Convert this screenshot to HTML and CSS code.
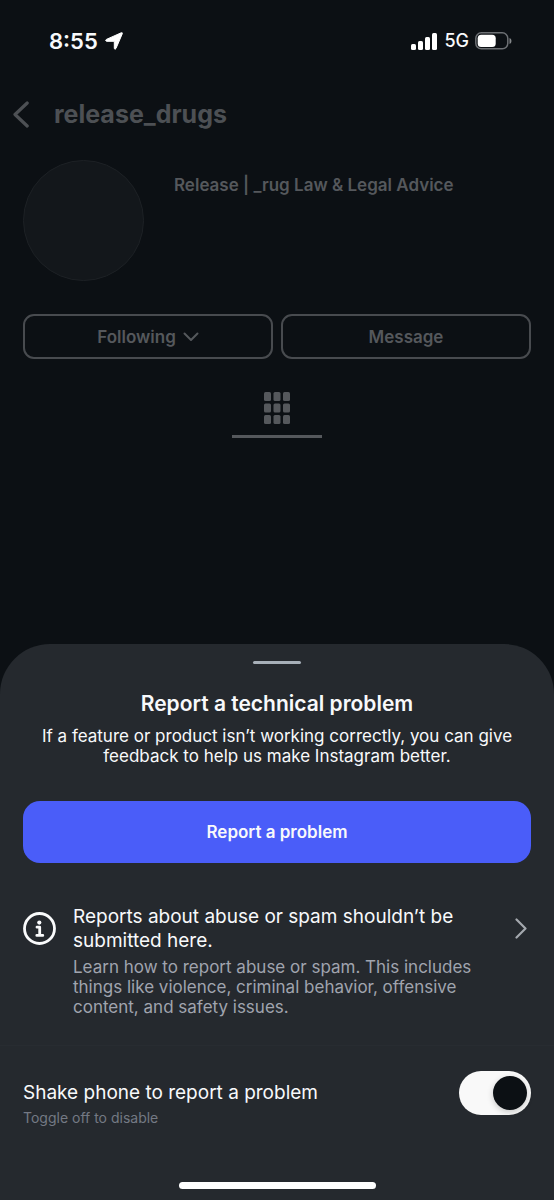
FILE: index.html
```html
<!DOCTYPE html>
<html lang="en">
<head>
<meta charset="utf-8">
<meta name="viewport" content="width=device-width, initial-scale=1">
<title>Report a technical problem</title>
<link rel="stylesheet" href="styles.css">
</head>
<body>
<div class="status">
  <div class="status-group">
    <span class="time">8:55</span>
    <svg width="18" height="18" viewBox="0 0 18 18" aria-hidden="true"><path d="M16.2.8Q17.8.3 17.2 1.9L11 16.4Q9.7 18.2 9.3 16.3V9.3H1.6Q-.2 8.8 1.4 7.4Z" fill="#fff" stroke="#fff" stroke-width="1" stroke-linejoin="round"/></svg>
  </div>
  <div class="status-group status-right">
    <svg width="27" height="17" viewBox="0 0 27 17" fill="#fff" aria-hidden="true"><rect x="0" y="11" width="5" height="6" rx="1.5"/><rect x="7" y="8" width="5" height="9" rx="1.5"/><rect x="14" y="4" width="5" height="13" rx="1.5"/><rect x="21" y="0" width="5" height="17" rx="1.5"/></svg>
    <span class="network">5G</span>
    <svg width="37" height="18" viewBox="0 0 37 18" aria-hidden="true"><rect x=".8" y=".8" width="32" height="16" rx="5.5" fill="none" stroke="#6d7074" stroke-width="1.5"/><rect x="2.7" y="2.7" width="18" height="12.4" rx="3.5" fill="#fff"/><path d="M34.5 6q2 .7 2 3t-2 3z" fill="#85888b"/></svg>
  </div>
</div>

<main class="profile">
  <header class="profile-bar">
    <button class="back" type="button" aria-label="Back"><svg width="16" height="27" viewBox="0 0 16 27" aria-hidden="true"><path d="M14.2 2 2 13.5 14.2 25" fill="none" stroke="#4d5054" stroke-width="3.2" stroke-linecap="round" stroke-linejoin="round"/></svg></button>
    <h1 class="username">release_drugs</h1>
  </header>
  <section class="identity">
    <div class="avatar"></div>
    <p class="fullname">Release | _rug Law &amp; Legal Advice</p>
  </section>
  <div class="actions">
    <button class="action" type="button">Following <svg width="16" height="10" viewBox="0 0 16 10" aria-hidden="true"><path d="m1.5 1.5 6.5 6.5 6.5-6.5" fill="none" stroke="#55585c" stroke-width="2" stroke-linecap="round" stroke-linejoin="round"/></svg></button>
    <button class="action" type="button">Message</button>
  </div>
  <button class="tab" type="button" aria-label="Posts grid">
    <svg width="26" height="32" viewBox="0 0 26 32" fill="#55585c" aria-hidden="true"><rect width="7" height="9" rx="1.5"/><rect x="9.5" width="7" height="9" rx="1.5"/><rect x="19" width="7" height="9" rx="1.5"/><rect y="11.5" width="7" height="9" rx="1.5"/><rect x="9.5" y="11.5" width="7" height="9" rx="1.5"/><rect x="19" y="11.5" width="7" height="9" rx="1.5"/><rect y="23" width="7" height="9" rx="1.5"/><rect x="9.5" y="23" width="7" height="9" rx="1.5"/><rect x="19" y="23" width="7" height="9" rx="1.5"/></svg>
  </button>
</main>

<section class="sheet" aria-labelledby="sheet-title">
  <div class="handle"></div>
  <h2 class="sheet-title" id="sheet-title">Report a technical problem</h2>
  <p class="sheet-text">If a feature or product isn’t working correctly, you can give feedback to help us make Instagram better.</p>
  <button class="primary" type="button">Report a problem</button>
  <a class="notice" href="#abuse">
    <svg class="notice-icon" width="33" height="33" viewBox="0 0 33 33" aria-hidden="true"><circle cx="16.5" cy="16.5" r="15" fill="none" stroke="#fafbfc" stroke-width="2.8"/><circle cx="16.3" cy="10.6" r="2.1" fill="#fafbfc"/><path d="M14 15.2h2.7v8M13.8 23.4h6" fill="none" stroke="#fafbfc" stroke-width="2.8" stroke-linecap="round" stroke-linejoin="round"/></svg>
    <span class="notice-body">
      <span class="row-title">Reports about abuse or spam shouldn’t be submitted here.</span>
      <span class="notice-text">Learn how to report abuse or spam. This includes things like violence, criminal behavior, offensive content, and safety issues.</span>
    </span>
    <svg class="notice-arrow" width="12" height="21" viewBox="0 0 12 21" aria-hidden="true"><path d="m1.5 1.5 9 9-9 9" fill="none" stroke="#a4a8ae" stroke-width="2.2" stroke-linecap="round" stroke-linejoin="round"/></svg>
  </a>
  <div class="setting">
    <label class="setting-label" for="shake"><span class="row-title">Shake phone to report a problem</span><span class="hint">Toggle off to disable</span></label>
    <input class="toggle" id="shake" type="checkbox" role="switch" checked>
  </div>
  <div class="home"></div>
</section>
</body>
</html>
```
FILE: styles.css
```css
* {
  box-sizing: border-box;
}

body {
  margin: 0;
  min-height: 100vh;
  display: flex;
  flex-direction: column;
  background: #0c1014;
  color: #f8f9fb;
  font-family: Inter, "Liberation Sans", sans-serif;
}

h1, h2, p {
  margin: 0;
}

svg {
  display: block;
  flex: none;
}

button {
  margin: 0;
  padding: 0;
  border: 0;
  background: none;
  color: inherit;
  font: inherit;
}

.status {
  display: flex;
  justify-content: space-between;
  align-items: center;
  padding: 28px 42px 0 49px;
}

.status-group {
  display: flex;
  align-items: center;
  gap: 7px;
}

.status-right {
  gap: 6px;
}

.time {
  font-size: 22px;
  line-height: 26px;
  font-weight: 600;
}

.network {
  font-size: 18px;
  line-height: 26px;
  font-weight: 500;
}

.profile {
  color: #55585c;
  font-weight: 600;
}

.profile-bar {
  display: flex;
  align-items: center;
  gap: 25px;
  padding: 44px 13px 0;
}

.username {
  font-size: 25px;
  line-height: 32px;
  font-weight: 700;
  color: #4d5054;
}

.identity {
  display: flex;
  gap: 30px;
  padding: 30px 23px 0;
}

.avatar {
  flex: none;
  width: 121px;
  height: 121px;
  border: 1px solid #1d2125;
  border-radius: 50%;
  background: #13171b;
}

.fullname {
  padding-top: 15px;
  font-size: 17px;
  line-height: 20px;
}

.actions {
  display: grid;
  grid-template-columns: 1fr 1fr;
  gap: 8px;
  padding: 33px 23px 0;
}

.action {
  display: flex;
  align-items: center;
  justify-content: center;
  gap: 7px;
  height: 45px;
  border: 2px solid #484b4f;
  border-radius: 11px;
  font-size: 17px;
  line-height: 20px;
}

.tab {
  display: flex;
  justify-content: center;
  width: 90px;
  margin: 33px auto 0;
  padding-bottom: 11px;
  border-bottom: 3px solid #55585c;
}

.sheet {
  display: flex;
  flex-direction: column;
  margin-top: auto;
  padding: 17px 23px 11px;
  border-radius: 50px 50px 0 0;
  background: #25292e;
}

.handle {
  width: 48px;
  height: 3px;
  margin: 0 auto;
  border-radius: 2px;
  background: #a7afb8;
}

.sheet-title {
  margin-top: 28px;
  font-size: 21px;
  line-height: 24px;
  font-weight: 600;
  text-align: center;
}

.sheet-text {
  margin-top: 10px;
  padding: 0 16px;
  font-size: 17px;
  line-height: 20px;
  text-align: center;
}

.primary {
  height: 62px;
  margin-top: 35px;
  border-radius: 17px;
  background: #4a5df9;
  font-size: 17px;
  font-weight: 600;
}

.notice {
  display: flex;
  align-items: flex-start;
  gap: 17px;
  margin-top: 42px;
  color: inherit;
  text-decoration: none;
}

.notice-icon {
  margin-top: 7px;
}

.notice-arrow {
  margin: 13px 4px 0 0;
}

.notice-body {
  flex: 1;
  display: flex;
  flex-direction: column;
  gap: 4px;
}

.row-title {
  font-size: 19px;
  line-height: 24px;
}

.notice-text {
  color: #a0a4ae;
  font-size: 17px;
  line-height: 20px;
}

.setting {
  display: flex;
  align-items: flex-start;
  justify-content: space-between;
  margin: 28px -23px 0;
  padding: 25px 23px 0;
  border-top: 1px solid #282c31;
}

.setting-label {
  display: flex;
  flex-direction: column;
  gap: 5px;
  padding-top: 10px;
}

.hint {
  color: #747984;
  font-size: 14px;
  line-height: 16px;
}

.toggle {
  appearance: none;
  display: flex;
  justify-content: flex-start;
  flex: none;
  width: 72px;
  height: 44px;
  margin: 0;
  padding: 5px 4px;
  border-radius: 22px;
  background: #686d76;
}

.toggle:checked {
  justify-content: flex-end;
  background: #f9f9f9;
}

.toggle::before {
  content: "";
  width: 34px;
  height: 34px;
  border-radius: 50%;
  background: #0c1014;
  box-shadow: 0 2px 6px #0003;
}

.home {
  width: 197px;
  height: 7px;
  margin: 56px auto 0;
  border-radius: 4px;
  background: #fff;
}
```
